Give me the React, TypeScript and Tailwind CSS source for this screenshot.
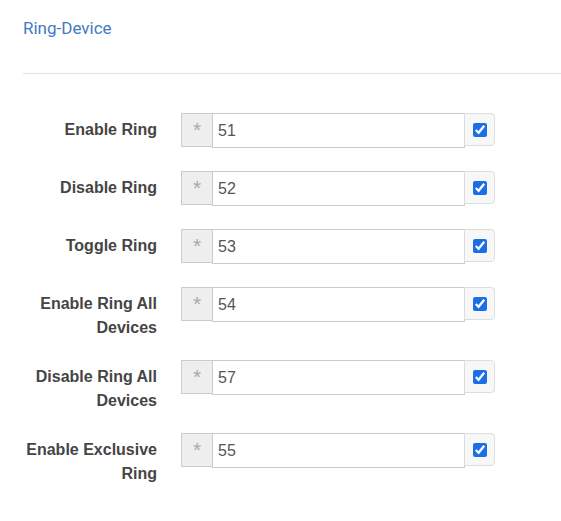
import React from 'react';

type Row = { label: React.ReactNode; value: string };

const rows: Row[] = [
  { label: 'Enable Ring', value: '51' },
  { label: 'Disable Ring', value: '52' },
  { label: 'Toggle Ring', value: '53' },
  { label: <>Enable Ring All<br />Devices</>, value: '54' },
  { label: <>Disable Ring All<br />Devices</>, value: '57' },
  { label: <>Enable Exclusive<br />Ring</>, value: '55' },
];

function FieldRow({ row }: { row: Row }) {
  return (
    <div className="flex items-start mb-[20px]">
      <label className="w-[157px] shrink-0 text-right pt-[5px] text-[16px] leading-[24px] font-bold text-[#454545]">
        {row.label}
      </label>
      <div className="ml-[24px] min-h-[38px] flex items-start">
        <div className="flex h-[34px]">
          <span className="w-[32px] h-[34px] flex items-start justify-center pt-[6px] bg-[#eeeeee] border border-[#cccccc] text-[#aaaaaa] text-[21px] leading-[20px]">
            *
          </span>
          <input
            type="text"
            defaultValue={row.value}
            className="w-[253px] h-[35px] -ml-px px-[5px] border border-[#cccccc] bg-white text-[16px] text-[#555555] outline-none"
          />
          <span className="w-[31px] h-[33px] -ml-px flex items-center justify-center bg-[#f7f7f7] border border-[#dddddd] rounded-r-[4px]">
            <input type="checkbox" defaultChecked className="w-[14px] h-[14px] accent-[#1a6fe6]" />
          </span>
        </div>
      </div>
    </div>
  );
}

export default function App() {
  return (
    <div
      className="w-[561px] h-[521px] bg-white overflow-hidden"
      style={{ fontFamily: '"Liberation Sans", Arial, sans-serif' }}
    >
      <div className="pl-[23px] pt-[18px]">
        <h3 className="text-[17px] leading-[20px] text-[#3f7bc4]" style={{ fontFamily: 'Roboto, "Liberation Sans", sans-serif' }}>
          Ring-Device
        </h3>
        <hr className="mt-[35px] border-t border-[#e3e3e3]" />
      </div>
      <div className="pt-[39px]">
        {rows.map((r) => (
          <FieldRow key={r.value} row={r} />
        ))}
      </div>
    </div>
  );
}
